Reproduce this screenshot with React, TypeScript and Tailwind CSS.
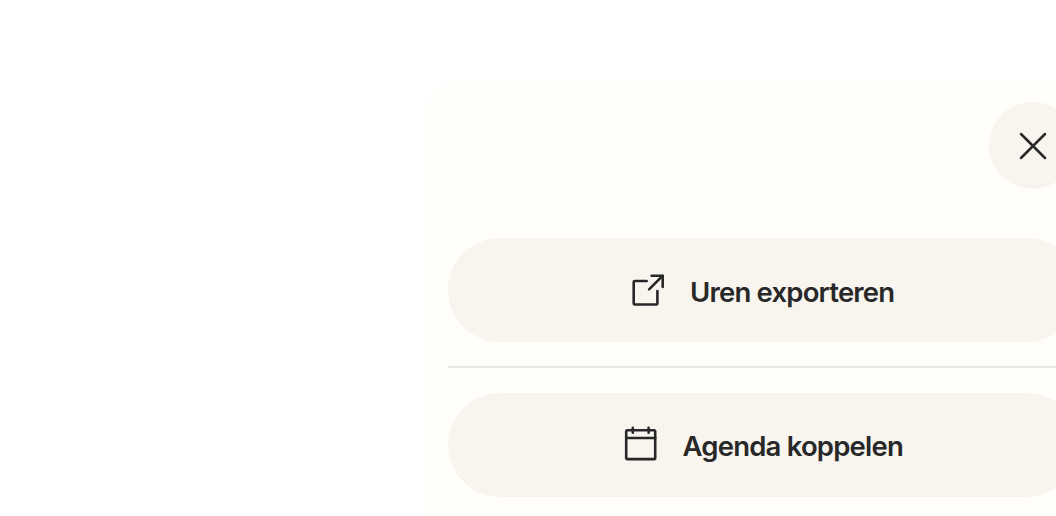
import { FC, ReactNode } from 'react';

interface IconProps {
  className?: string;
}

interface MenuButtonProps {
  icon: ReactNode;
  children: ReactNode;
}

const CloseIcon: FC<IconProps> = ({ className }) => (
  <svg
    viewBox="0 0 28 28"
    className={className}
    fill="none"
    stroke="currentColor"
    strokeWidth="2.5"
    strokeLinecap="round"
  >
    <path d="M2 2l24 24M26 2L2 26" />
  </svg>
);

const ExportIcon: FC<IconProps> = ({ className }) => (
  <svg
    viewBox="0 0 34 34"
    className={className}
    fill="none"
    stroke="currentColor"
    strokeWidth="2.6"
    strokeLinecap="round"
    strokeLinejoin="round"
  >
    <path d="M15.7 8H3.7a1 1 0 0 0-1 1v21.5a1 1 0 0 0 1 1h21.7a1 1 0 0 0 1-1V18" />
    <path d="M18.1 16.4L31.5 2.9" />
    <path d="M20.6 2.8h11.1v11.1" />
  </svg>
);

const CalendarIcon: FC<IconProps> = ({ className }) => (
  <svg
    viewBox="0 0 34 36"
    className={className}
    fill="none"
    stroke="currentColor"
    strokeWidth="2.6"
    strokeLinecap="round"
    strokeLinejoin="round"
  >
    <rect x="2.2" y="4.2" width="29" height="28.9" rx="1.2" />
    <path d="M2.2 12h29M8.8 1.9v4.8M24.6 1.9v4.8" />
  </svg>
);

const MenuButton: FC<MenuButtonProps> = ({ icon, children }) => (
  <button
    type="button"
    className="flex h-[104px] w-full items-center justify-center gap-[25px] rounded-full bg-[#f8f5ef] text-[27.5px] font-semibold text-[#282828]"
  >
    {icon}
    {children}
  </button>
);

const App = () => {
  return (
    <div className="h-[516px] w-full overflow-hidden bg-white pt-20 pl-[424px] font-['Inter',sans-serif]">
      <div className="flex h-[434.5px] w-[656px] flex-col rounded-tl-[40px] bg-[#fffefa] pr-[1px] pl-6">
        <div className="flex justify-end pt-[22.25px] pr-[3px]">
          <button
            type="button"
            aria-label="Sluiten"
            className="flex size-[87px] items-center justify-center rounded-full bg-[#f8f5ef] text-[#282828]"
          >
            <CloseIcon className="size-7" />
          </button>
        </div>
        <div className="mt-[48.75px]">
          <MenuButton icon={<ExportIcon className="size-[34px]" />}>
            <span className="w-[206px] pt-[5px] text-left tracking-[-0.029em] whitespace-nowrap">
              Uren exporteren
            </span>
          </MenuButton>
          <div className="mt-6 mb-[24.5px] h-[2px] bg-[#e9e8e4]" />
          <MenuButton icon={<CalendarIcon className="mb-[2px] h-9 w-[34px]" />}>
            <span className="w-[221px] pt-[5px] text-left tracking-[-0.029em] whitespace-nowrap">
              Agenda koppelen
            </span>
          </MenuButton>
        </div>
      </div>
    </div>
  );
};

export default App;
